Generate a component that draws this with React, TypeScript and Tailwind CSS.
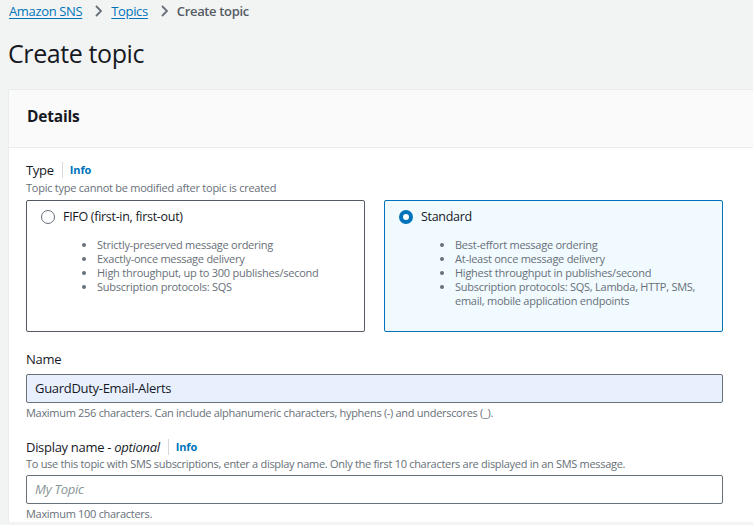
export default function App() {
  return (
    <div className="h-[525px] w-[753px] overflow-hidden bg-[#f2f3f3] font-['Open_Sans',sans-serif] tracking-[-0.25px] text-[#16191f]">
      {/* Breadcrumbs */}
      <nav className="flex items-center pl-[9px] pt-[1px] text-[13px] leading-[20px] tracking-[-0.35px]">
        <a className="text-[#0073bb] underline underline-offset-2">Amazon SNS</a>
        <Chevron />
        <a className="text-[#0073bb] underline underline-offset-2">Topics</a>
        <Chevron />
        <span className="font-semibold text-[#545b64]">Create topic</span>
      </nav>

      <h1 className="pl-[8px] pt-[15px] text-[25px] leading-[34px] font-normal tracking-[-0.4px]">Create topic</h1>

      {/* Card */}
      <div className="ml-[8px] mt-[19px] w-[760px] border-l border-t border-[#eaeded] bg-white">
        <div className="flex h-[58px] items-center border-b border-[#eaeded] bg-[#fafafa] pb-[3px] pl-[18px]">
          <h2 className="text-[15.5px] font-bold tracking-[-0.2px]">Details</h2>
        </div>

        <div className="w-[714px] pl-[17px] pt-[13px]">
          {/* Type */}
          <Label text="Type" info />
          <p className="mt-[2px] text-[11px] leading-[14px] text-[#687078]">Topic type cannot be modified after topic is created</p>

          <div className="mt-[5px] grid grid-cols-2 gap-[19px]">
            <TypeCard
              title="FIFO (first-in, first-out)"
              items={[
                "Strictly-preserved message ordering",
                "Exactly-once message delivery",
                "High throughput, up to 300 publishes/second",
                "Subscription protocols: SQS",
              ]}
            />
            <TypeCard
              selected
              title="Standard"
              items={[
                "Best-effort message ordering",
                "At-least once message delivery",
                "Highest throughput in publishes/second",
                "Subscription protocols: SQS, Lambda, HTTP, SMS, email, mobile application endpoints",
              ]}
            />
          </div>

          {/* Name */}
          <div className="mt-[18px]">
            <Label text="Name" />
            <div className="mt-[6px] flex h-[29px] items-center rounded-[2px] border border-[#687078] bg-[#e8f0fe] pl-[8px] text-[13px] tracking-[-0.3px]">
              GuardDuty-Email-Alerts
            </div>
            <p className="mt-[2px] text-[11px] leading-[16px] tracking-[-0.3px] text-[#687078]">
              Maximum 256 characters. Can include alphanumeric characters, hyphens (-) and underscores (_).
            </p>
          </div>

          {/* Display name */}
          <div className="mt-[17px]">
            <Label text="Display name - " italic="optional" info />
            <p className="mt-[1px] text-[11px] leading-[14px] tracking-[-0.3px] text-[#687078]">
              To use this topic with SMS subscriptions, enter a display name. Only the first 10 characters are displayed in an SMS message.
            </p>
            <div className="mt-[4px] flex h-[29px] items-center rounded-[2px] border border-[#687078] bg-white pl-[8px] text-[13px] italic text-[#879596]">
              My Topic
            </div>
            <p className="mt-[2px] text-[11px] leading-[16px] tracking-[-0.3px] text-[#687078]">Maximum 100 characters.</p>
          </div>
        </div>
      </div>
    </div>
  );
}

function Chevron() {
  return (
    <svg className="ml-[12px] mr-[8px] h-[12px] w-[9px] text-[#687078]" viewBox="0 0 9 12" fill="none" stroke="currentColor" strokeWidth="1.8">
      <path d="M2 1l5 5-5 5" />
    </svg>
  );
}

function Label({ text, italic, info }: { text: string; italic?: string; info?: boolean }) {
  return (
    <div className="flex items-center text-[13px] leading-[18px] tracking-[-0.3px]">
      <span>
        {text}
        {italic && <i>{italic}</i>}
      </span>
      {info && (
        <>
          <span className="ml-[8px] mr-[7px] h-[16px] w-px bg-[#d5dbdb]" />
          <span className="text-[11px] font-bold tracking-[-0.1px] text-[#0073bb]">Info</span>
        </>
      )}
    </div>
  );
}

function TypeCard({ title, items, selected }: { title: string; items: string[]; selected?: boolean }) {
  return (
    <div
      className={
        selected
          ? "h-[132px] rounded-[2px] border border-[#0073bb] bg-[#f1faff] pl-[14px] pt-[7px]"
          : "h-[132px] rounded-[2px] border border-[#545b64] bg-white pl-[14px] pt-[7px]"
      }
    >
      <div className="flex items-center gap-[8px] text-[12.5px] leading-[18px] tracking-[-0.3px]">
        {selected ? (
          <span className="h-[14px] w-[14px] rounded-full border-[4px] border-[#0073bb] bg-white" />
        ) : (
          <span className="h-[14px] w-[14px] rounded-full border border-[#687078] bg-white" />
        )}
        <span>{title}</span>
      </div>
      <ul className="mt-[12px] list-disc pl-[56px] pr-[12px] text-[11px] leading-[14px] tracking-[-0.25px] text-[#687078] marker:text-[#687078]">
        {items.map((t) => (
          <li key={t}>{t}</li>
        ))}
      </ul>
    </div>
  );
}
